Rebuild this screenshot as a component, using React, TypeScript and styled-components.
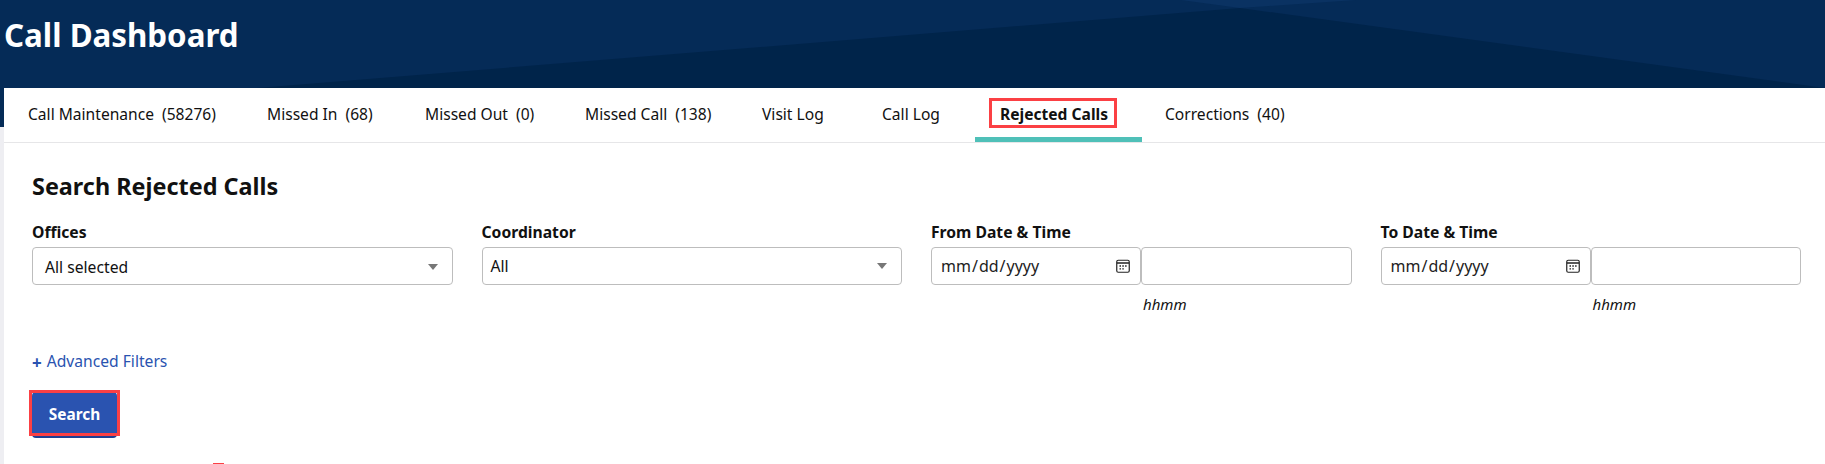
import React from 'react';
import styled, { createGlobalStyle } from 'styled-components';

const tabs = [
  { label: 'Call Maintenance', count: 58276, width: 239 },
  { label: 'Missed In', count: 68, width: 158 },
  { label: 'Missed Out', count: 0, width: 160 },
  { label: 'Missed Call', count: 138, width: 177 },
  { label: 'Visit Log', width: 120 },
  { label: 'Call Log', width: 118 },
  { label: 'Rejected Calls', width: 167, active: true },
  { label: 'Corrections', count: 40, width: 160 },
];

function DateTime() {
  return (
    <>
      <DateRow>
        <DateBox>
          <DateInput type="date" />
          <CalendarIcon viewBox="0 0 14 14" aria-hidden="true">
            <rect x="0.75" y="1.25" width="12.5" height="12" rx="1.5" fill="none" stroke="#222" strokeWidth="1.2" />
            <path d="M1 4h12" stroke="#222" strokeWidth="1.5" />
            <path d="M3.5 7h1.5M6.3 7h1.5M9.1 7h1.5M3.5 9.8h1.5M6.3 9.8h1.5" stroke="#222" strokeWidth="1.3" />
          </CalendarIcon>
        </DateBox>
        <TimeInput type="text" />
      </DateRow>
      <Hint>hhmm</Hint>
    </>
  );
}

export default function App() {
  return (
    <>
      <GlobalStyle />
      <Header>
        <HeaderArt viewBox="0 0 1825 127" preserveAspectRatio="none" aria-hidden="true">
          <polygon points="1181,0 1356,0 1240,8" fill="#0a3262" />
          <polygon points="257,88 1240,8 1825,88 1825,127 257,127" fill="#00244a" />
        </HeaderArt>
        <Title>Call Dashboard</Title>
      </Header>
      <Panel>
        <TabBar>
          {tabs.map((tab) => (
            <Tab key={tab.label} $width={tab.width} $active={tab.active}>
              <TabLabel $active={tab.active}>
                {tab.label}
                {tab.count !== undefined && <Count>({tab.count})</Count>}
              </TabLabel>
            </Tab>
          ))}
        </TabBar>
        <Content>
          <Heading>Search Rejected Calls</Heading>
          <FilterGrid>
            <Field>
              <Label>Offices</Label>
              <Select $offset={2}>
                All selected
                <Caret />
              </Select>
            </Field>
            <Field>
              <Label>Coordinator</Label>
              <Select $indent={8}>
                All
                <Caret />
              </Select>
            </Field>
            <Field>
              <Label>From Date &amp; Time</Label>
              <DateTime />
            </Field>
            <Field>
              <Label>To Date &amp; Time</Label>
              <DateTime />
            </Field>
          </FilterGrid>
          <AdvancedLink href="#">
            <Plus>+</Plus>
            Advanced Filters
          </AdvancedLink>
          <SearchButton type="button">Search</SearchButton>
          <CutOffMark />
        </Content>
      </Panel>
    </>
  );
}

const GlobalStyle = createGlobalStyle`
  html, body {
    margin: 0;
    height: 464px;
    overflow: hidden;
    background: #eeeef2;
    font-family: "Noto Sans", "Open Sans", sans-serif;
    color: #111;
  }
  * {
    box-sizing: border-box;
  }
`;

const Header = styled.header`
  position: relative;
  height: 127px;
  margin-bottom: -39px;
  background: #052b57;
`;

const HeaderArt = styled.svg`
  position: absolute;
  inset: 0;
  width: 100%;
  height: 100%;
`;

const Title = styled.h1`
  position: relative;
  margin: 0;
  padding: 14px 0 0 4px;
  font-size: 31.3px;
  line-height: 42px;
  font-weight: 700;
  color: #fff;
`;

const Panel = styled.main`
  position: relative;
  height: 376px;
  margin-left: 4px;
  background: #fff;
  overflow: hidden;
`;

const TabBar = styled.nav`
  display: flex;
  height: 55px;
  margin-left: -1px;
  border-bottom: 1px solid #e6e6e8;
`;

const Tab = styled.div<{ $width: number; $active?: boolean }>`
  flex: none;
  width: ${(p) => p.$width}px;
  height: 54px;
  margin-right: ${(p) => (p.$active ? -2 : 0)}px;
  padding: 10px 0 0 14px;
  border-bottom: ${(p) => (p.$active ? '5px solid #4fc0b8' : 'none')};
`;

const TabLabel = styled.span<{ $active?: boolean }>`
  display: inline-block;
  height: 30px;
  padding: 0 6px 0 8px;
  font-size: 15.6px;
  line-height: 27px;
  font-weight: ${(p) => (p.$active ? 700 : 400)};
  white-space: nowrap;
  border: 3px solid ${(p) => (p.$active ? '#fb4044' : 'transparent')};
`;

const Count = styled.span`
  margin-left: 8px;
`;

const Content = styled.section`
  padding: 28px 0 0 28px;
`;

const Heading = styled.h2`
  margin: 0 0 22px;
  font-size: 23.4px;
  line-height: 30px;
  font-weight: 700;
`;

const FilterGrid = styled.div`
  display: grid;
  grid-template-columns: repeat(4, 420.5px);
  column-gap: 29px;
  height: 128px;
`;

const Field = styled.div`
  min-width: 0;
`;

const Label = styled.label`
  display: block;
  margin-bottom: 4px;
  font-size: 15.7px;
  line-height: 19px;
  padding-bottom: 1px;
  font-weight: 700;
`;

const Select = styled.div<{ $offset?: number; $indent?: number }>`
  display: flex;
  align-items: center;
  justify-content: space-between;
  height: 38px;
  padding: ${(p) => p.$offset ?? 0}px 14px 0 ${(p) => p.$indent ?? 12}px;
  border: 1px solid #bdbdbd;
  border-radius: 4px;
  font-size: 15.7px;
  background: #fff;
`;

const Caret = styled.span`
  width: 0;
  height: 0;
  border-left: 5px solid transparent;
  border-right: 5px solid transparent;
  border-top: 6px solid #777;
`;

const DateRow = styled.div`
  display: grid;
  grid-template-columns: 210px 1fr;
`;

const DateBox = styled.div`
  position: relative;
`;

const CalendarIcon = styled.svg`
  position: absolute;
  top: 12px;
  right: 11px;
  width: 14px;
  height: 14px;
  pointer-events: none;
`;

const DateInput = styled.input`
  display: block;
  width: 100%;
  height: 38px;
  padding: 0 8px;
  border: 1px solid #bdbdbd;
  border-radius: 4px;
  font-family: inherit;
  font-size: 16px;
  color: #222;
  background: #fff;

  &::-webkit-calendar-picker-indicator {
    display: none;
  }
`;

const TimeInput = styled(DateInput)``;

const Hint = styled.div`
  margin: 9px 0 0 212px;
  font-size: 15px;
  line-height: 20px;
  font-style: italic;
  font-weight: 400;
`;

const AdvancedLink = styled.a`
  display: flex;
  align-items: center;
  height: 20px;
  font-size: 15.65px;
  color: #2a53b0;
  text-decoration: none;
`;

const Plus = styled.span`
  margin: 3px 5px 0 0;
  font-size: 17px;
  font-weight: 700;
  line-height: 16px;
`;

const SearchButton = styled.button`
  position: relative;
  display: block;
  width: 85px;
  height: 46px;
  margin-top: 21px;
  border: none;
  border-radius: 4px;
  border-bottom: 2px solid #1e3f94;
  background: #2a53b0;
  color: #fff;
  font-family: inherit;
  font-size: 15.4px;
  font-weight: 700;
  cursor: pointer;

  &::after {
    content: '';
    position: absolute;
    inset: -2px -3px 0 -3px;
    border: 3px solid #fb4044;
  }
`;

const CutOffMark = styled.div`
  width: 11px;
  height: 2px;
  margin: 25px 0 0 181px;
  background: #fb4044;
`;
